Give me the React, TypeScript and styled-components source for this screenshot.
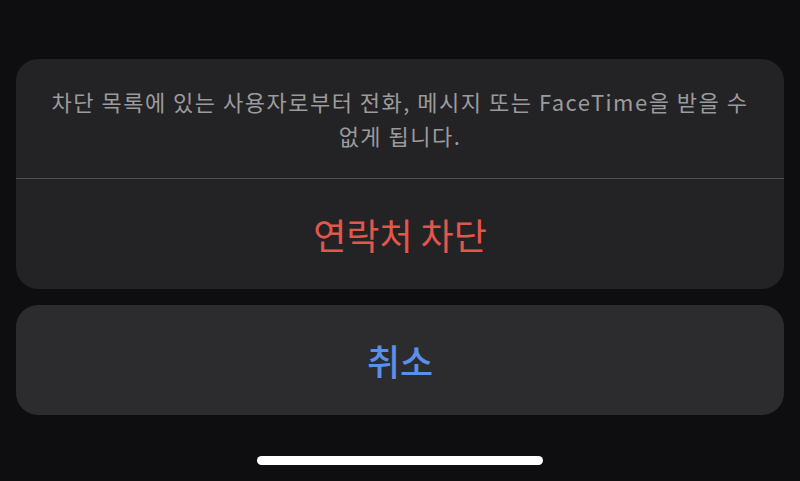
import React from 'react';
import styled, { createGlobalStyle } from 'styled-components';

const GlobalStyle = createGlobalStyle`
	html, body {
		margin: 0;
		padding: 0;
		background: #0e0e10;
	}
	body {
		font-family: 'Noto Sans CJK KR', 'Noto Sans', sans-serif;
		-webkit-font-smoothing: antialiased;
	}
`;

const Sheet = styled.div`
	width: 800px;
	height: 481px;
	box-sizing: border-box;
	padding: 59px 16px 0;
	display: flex;
	flex-direction: column;
	gap: 16px;
	background: #0e0e10;
`;

const Card = styled.div<{ $bg: string }>`
	display: flex;
	flex-direction: column;
	border-radius: 22px;
	overflow: hidden;
	background: ${(p) => p.$bg};
`;

const Message = styled.div`
	height: 120px;
	box-sizing: border-box;
	padding: 0 24px 2px;
	display: flex;
	align-items: center;
	justify-content: center;
	text-align: center;
	color: #9b9b9d;
	font-size: 22px;
	letter-spacing: 1.5px;
	line-height: 34px;
	word-break: keep-all;
	border-bottom: 1px solid #505052;
`;

const ActionButton = styled.button<{ $color: string; $bold?: boolean }>`
	height: 110px;
	border: 0;
	background: transparent;
	font-family: inherit;
	font-size: 36px;
	font-weight: ${(p) => (p.$bold ? 500 : 400)};
	color: ${(p) => p.$color};
	padding: 0;
	cursor: pointer;
`;

const HomeIndicator = styled.div`
	align-self: center;
	margin-top: 25px;
	width: 286px;
	height: 9px;
	border-radius: 5px;
	background: #ffffff;
`;

const App = () => {
	return (
		<>
			<GlobalStyle />
			<Sheet>
				<Card $bg="#232325">
					<Message>
						차단 목록에 있는 사용자로부터 전화, 메시지 또는 FaceTime을 받을 수 없게 됩니다.
					</Message>
					<ActionButton $color="#e2564b">연락처 차단</ActionButton>
				</Card>
				<Card $bg="#2c2c2e">
					<ActionButton $color="#5b8fe8" $bold>
						취소
					</ActionButton>
				</Card>
				<HomeIndicator />
			</Sheet>
		</>
	);
};

export default App;
